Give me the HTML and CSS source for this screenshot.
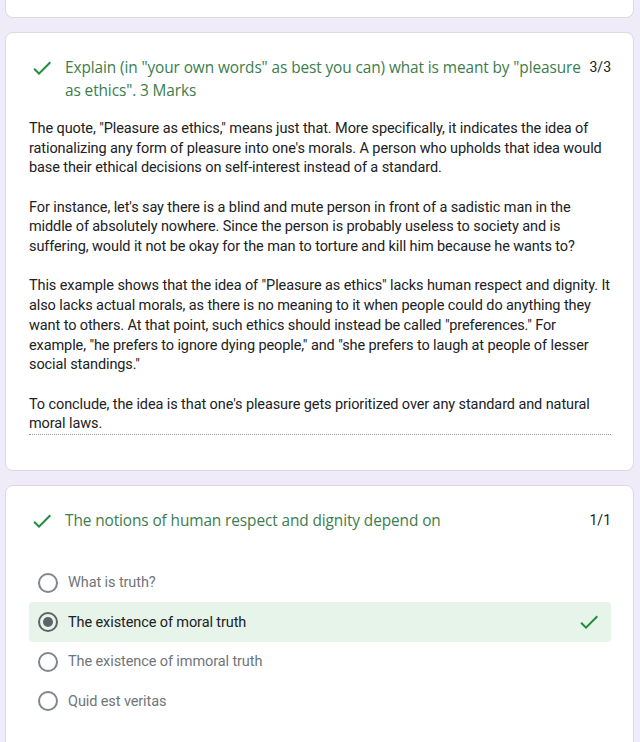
FILE: index.html
```html
<!DOCTYPE html>
<html>
<head>
<meta charset="utf-8">
<link rel="stylesheet" href="styles.css">
</head>
<body>
<div class="page">
  <div class="card card-top"></div>

  <div class="card">
    <div class="q-head">
      <svg class="check" viewBox="0 0 24 24" width="24" height="24"><path d="M9 16.17L4.83 12l-1.42 1.41L9 19 21 7l-1.41-1.41z"/></svg>
      <div class="q-title">Explain (in "your own words" as best you can) what is meant by "pleasure as ethics". 3 Marks</div>
      <div class="score">3/3</div>
    </div>
    <div class="answer">
      <p>The quote, "Pleasure as ethics," means just that. More specifically, it indicates the idea of rationalizing any form of pleasure into one's morals. A person who upholds that idea would base their ethical decisions on self-interest instead of a standard.</p>
      <p>For instance, let's say there is a blind and mute person in front of a sadistic man in the middle of absolutely nowhere. Since the person is probably useless to society and is suffering, would it not be okay for the man to torture and kill him because he wants to?</p>
      <p>This example shows that the idea of "Pleasure as ethics" lacks human respect and dignity. It also lacks actual morals, as there is no meaning to it when people could do anything they want to others. At that point, such ethics should instead be called "preferences." For example, "he prefers to ignore dying people," and "she prefers to laugh at people of lesser social standings."</p>
      <p>To conclude, the idea is that one's pleasure gets prioritized over any standard and natural moral laws.</p>
    </div>
  </div>

  <div class="card card-last">
    <div class="q-head">
      <svg class="check" viewBox="0 0 24 24" width="24" height="24"><path d="M9 16.17L4.83 12l-1.42 1.41L9 19 21 7l-1.41-1.41z"/></svg>
      <div class="q-title">The notions of human respect and dignity depend on</div>
      <div class="score">1/1</div>
    </div>
    <div class="options">
      <div class="option"><span class="radio"></span><span class="opt-text">What is truth?</span></div>
      <div class="option correct"><span class="radio checked"></span><span class="opt-text">The existence of moral truth</span>
        <svg class="opt-check" viewBox="0 0 24 24" width="24" height="24"><path d="M9 16.17L4.83 12l-1.42 1.41L9 19 21 7l-1.41-1.41z"/></svg>
      </div>
      <div class="option"><span class="radio"></span><span class="opt-text">The existence of immoral truth</span></div>
      <div class="option"><span class="radio"></span><span class="opt-text">Quid est veritas</span></div>
    </div>
  </div>
</div>
</body>
</html>
```
FILE: styles.css
```css
html, body {
  margin: 0;
  padding: 0;
  background: #f0ebf8;
  height: 100%;
  overflow: hidden;
}
.page {
  padding: 0 6px 0 5px;
  display: flex;
  flex-direction: column;
  gap: 14px;
  font-family: Roboto, "Liberation Sans", sans-serif;
}
.card {
  background: #fff;
  border: 1px solid #dadce0;
  border-radius: 8px;
  padding: 23px 22px 35px 23px;
}
.card-top {
  height: 18px;
  padding: 0;
  border-top: none;
  border-top-left-radius: 0;
  border-top-right-radius: 0;
  box-sizing: border-box;
}
.card-last {
  height: 300px;
}
.q-head {
  display: flex;
  align-items: flex-start;
}
.check {
  fill: #1e8e3e;
  flex: none;
  margin: 0 11px 0 1px;
}
.q-title {
  flex: 1;
  font-family: "Open Sans", "Noto Sans", sans-serif;
  font-size: 15.4px;
  line-height: 23px;
  color: #3b7d4d;
  letter-spacing: -0.1px;
}
.score {
  flex: none;
  font-size: 14px;
  line-height: 23px;
  color: #202124;
  margin-left: 6px;
}
.answer {
  margin-top: 17px;
  border-bottom: 1px dotted #9aa0a6;
  font-size: 14.5px;
  line-height: 19.68px;
  color: #202124;
  letter-spacing: -0.1px;
}
.answer p {
  margin: 0 0 19.68px;
}
.answer p:last-child {
  margin-bottom: 0;
}
.options {
  margin-top: 30px;
  display: flex;
  flex-direction: column;
}
.option {
  display: flex;
  align-items: center;
  height: 39.5px;
  padding: 0 10px 0 9px;
  border-radius: 4px;
}
.option.correct {
  background: #e6f4ea;
}
.radio {
  width: 16px;
  height: 16px;
  border: 2px solid #80868b;
  border-radius: 50%;
  flex: none;
  display: flex;
  align-items: center;
  justify-content: center;
  margin-right: 10px;
}
.radio.checked {
  border-color: #5f6368;
}
.radio.checked::after {
  content: "";
  width: 10px;
  height: 10px;
  border-radius: 50%;
  background: #5f6368;
}
.opt-text {
  flex: 1;
  font-size: 14.5px;
  color: #70757a;
  letter-spacing: -0.1px;
}
.correct .opt-text {
  color: #202124;
}
.opt-check {
  fill: #1e8e3e;
  flex: none;
}
```
